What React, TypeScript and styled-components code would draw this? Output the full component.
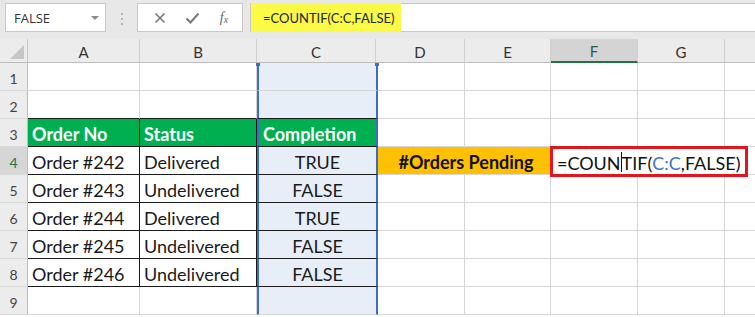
import React from "react";
import styled, { createGlobalStyle } from "styled-components";

const GlobalStyle = createGlobalStyle`
	html, body {
		margin:0;
		padding:0;
		background:#fff;
	}
	body {
		font-family: Lato, "Liberation Sans", sans-serif;
	}
`;

const Window = styled.div`
	width:755px;
	height:317px;
	overflow:hidden;
	display:flex;
	flex-direction:column;
	background:#fff;
`;

const FormulaBar = styled.div`
	flex:0 0 39px;
	box-sizing:border-box;
	display:flex;
	align-items:flex-start;
	padding:3px 0 0 5px;
	background:#e8e8e8;
`;

const NameBox = styled.div`
	flex:0 0 101px;
	height:29px;
	box-sizing:border-box;
	display:flex;
	align-items:center;
	justify-content:space-between;
	padding:0 6px 0 8px;
	background:#fff;
	border:1px solid #c8c8c8;
	font-family:"Open Sans", sans-serif;
	font-size:13px;
	color:#333;
`;

const Caret = styled.span`
	width:0;
	height:0;
	border-left:4px solid transparent;
	border-right:4px solid transparent;
	border-top:4px solid #8a8a8a;
`;

const Grip = styled.div`
	flex:0 0 auto;
	display:flex;
	flex-direction:column;
	gap:3px;
	margin:10px 14px 0 15px;
	span {
		width:2px;
		height:2px;
		background:#b4b4b4;
	}
`;

const IconBox = styled.div`
	flex:0 0 106px;
	height:29px;
	box-sizing:border-box;
	display:flex;
	align-items:center;
	justify-content:space-around;
	padding:0 4px 0 6px;
	background:#fff;
	border:1px solid #c8c8c8;
`;

const Fx = styled.span`
	font-family:"Liberation Serif", serif;
	font-style:italic;
	font-size:14px;
	color:#666;
	sub {
		font-size:10px;
		vertical-align:-1px;
	}
`;

const FormulaInput = styled.div`
	flex:1 1 auto;
	height:29px;
	margin-left:7px;
	box-sizing:border-box;
	display:flex;
	background:#fff;
	border:1px solid #c8c8c8;
	border-right:none;
`;

const Highlight = styled.div`
	flex:0 0 150px;
	display:flex;
	align-items:center;
	padding-left:12px;
	box-sizing:border-box;
	background:#fbfb47;
	font-size:13px;
	color:#222;
	margin:-1px 0;
	white-space:nowrap;
`;

const Sheet = styled.div`
	display:flex;
	flex-direction:column;
	font-size:18px;
	color:#111;
`;

const Row = styled.div<{ $h?: number }>`
	display:grid;
	grid-template-columns:28px 112px 117px 119px 89px 86px 87px 87px 87px;
	height:${p => p.$h ?? 28}px;
`;

const Corner = styled.div`
	background:#ececec;
	border-right:1px solid #c4c4c4;
	border-bottom:1px solid #bdbdbd;
	display:flex;
	align-items:flex-end;
	justify-content:flex-end;
	padding:0 3px 3px 0;
	box-sizing:border-box;
	span {
		width:0;
		height:0;
		border-left:14px solid transparent;
		border-bottom:14px solid #c6c6c6;
	}
`;

const ColHead = styled.div<{ $active?: boolean }>`
	box-sizing:border-box;
	display:flex;
	align-items:center;
	justify-content:center;
	padding-top:2px;
	font-size:15px;
	background:${p => (p.$active ? "#d4d4d4" : "#ececec")};
	color:${p => (p.$active ? "#26603f" : "#333")};
	border-right:1px solid #cfcfcf;
	border-bottom:${p => (p.$active ? "2px solid #217346" : "1px solid #bdbdbd")};
`;

const RowHead = styled.div<{ $active?: boolean }>`
	box-sizing:border-box;
	display:flex;
	align-items:center;
	justify-content:center;
	padding-top:3px;
	font-size:14px;
	background:${p => (p.$active ? "#d6d6d6" : "#ececec")};
	color:${p => (p.$active ? "#217346" : "#444")};
	border-right:1px solid #bdbdbd;
	border-bottom:1px solid #d8d8d8;
`;

const RANGE = "#3d6cc0";

const Cell = styled.div<{
	$head?: boolean;
	$table?: boolean;
	$topEdge?: boolean;
	$sel?: boolean;
	$first?: boolean;
	$center?: boolean;
}>`
	position:relative;
	box-sizing:border-box;
	display:flex;
	align-items:center;
	padding:3px 4px 0 4px;
	white-space:nowrap;
	justify-content:${p => (p.$center ? "center" : "flex-start")};
	background:${p =>
		p.$head ? "#00b050" : p.$sel ? "#e8eef8" : "#fff"};
	color:${p => (p.$head ? "#fff" : "#1a1a1a")};
	font-weight:${p => (p.$head ? 700 : 400)};
	border-right:1px solid ${p => (p.$table ? "#1a1a1a" : "#d6d6d6")};
	border-bottom:1px solid ${p => (p.$table || p.$topEdge ? "#1a1a1a" : "#d6d6d6")};
	${p =>
		p.$sel &&
		`
		border-left:2px solid ${RANGE};
		border-right:2px solid ${RANGE};
		margin-right:-2px;
		z-index:1;
	`}
	${p =>
		p.$first &&
		`
		&::before, &::after {
			content:"";
			position:absolute;
			top:0;
			width:4px;
			height:3px;
			background:${RANGE};
		}
		&::before { left:-3px; }
		&::after { right:-3px; }
	`}
`;

const Pending = styled.div`
	grid-column:span 2;
	box-sizing:border-box;
	display:flex;
	align-items:center;
	justify-content:center;
	padding:3px 0 0 6px;
	background:#ffc000;
	font-weight:700;
	color:#111;
	border-right:1px solid #d6d6d6;
	border-bottom:1px solid #d6d6d6;
`;

const Editor = styled.div`
	position:absolute;
	top:-1px;
	left:-1px;
	width:198px;
	height:31px;
	box-sizing:border-box;
	display:flex;
	align-items:center;
	padding:3px 0 0 4px;
	background:#fff;
	border:3px solid #e3161f;
	z-index:2;
	color:#111;
	white-space:nowrap;
`;

const Ref = styled.span`
	color:#4472c4;
`;

const Cursor = styled.span`
	display:inline-block;
	width:1px;
	height:20px;
	background:#111;
	margin-top:-2px;
`;

// last column sits past the window edge, so its letter is not shown
const cols = ["A", "B", "C", "D", "E", "F", "G", ""];

const orders = [
	["Order #242", "Delivered", "TRUE"],
	["Order #243", "Undelivered", "FALSE"],
	["Order #244", "Delivered", "TRUE"],
	["Order #245", "Undelivered", "FALSE"],
	["Order #246", "Undelivered", "FALSE"],
];

const Blank = ({
	from,
	count,
	topEdge,
	first,
}: {
	from: number;
	count: number;
	topEdge?: boolean;
	first?: boolean;
}) => (
	<>
		{Array.from({ length: count }).map((_, i) => {
			const col = from + i;
			return (
				<Cell
					key={col}
					$sel={col === 2}
					$first={first && col === 2}
					$topEdge={topEdge && col < 3}
				/>
			);
		})}
	</>
);

const App: React.FC = () => {
	return (
		<Window>
			<GlobalStyle />
			<FormulaBar>
				<NameBox>
					FALSE
					<Caret />
				</NameBox>
				<Grip>
					<span />
					<span />
					<span />
				</Grip>
				<IconBox>
					<svg width="12" height="12" viewBox="0 0 12 12">
						<path d="M1.5 1.5 L10.5 10.5 M10.5 1.5 L1.5 10.5" stroke="#777" strokeWidth="1.6" />
					</svg>
					<svg width="15" height="12" viewBox="0 0 15 12">
						<path d="M1.5 6.5 L5.5 10.5 L13.5 1.5" fill="none" stroke="#777" strokeWidth="2" />
					</svg>
					<Fx>
						f<sub>x</sub>
					</Fx>
				</IconBox>
				<FormulaInput>
					<Highlight>=COUNTIF(C:C,FALSE)</Highlight>
				</FormulaInput>
			</FormulaBar>

			<Sheet>
				<Row $h={24}>
					<Corner>
						<span />
					</Corner>
					{cols.map((c, i) => (
						<ColHead key={i} $active={c === "F"}>
							{c}
						</ColHead>
					))}
				</Row>

				<Row>
					<RowHead>1</RowHead>
					<Blank from={0} count={8} first />
				</Row>
				<Row>
					<RowHead>2</RowHead>
					<Blank from={0} count={8} topEdge />
				</Row>

				<Row>
					<RowHead>3</RowHead>
					<Cell $head $table>Order No</Cell>
					<Cell $head $table>Status</Cell>
					<Cell $head $table $sel>Completion</Cell>
					<Blank from={3} count={5} />
				</Row>

				{orders.map((o, i) => (
					<Row key={o[0]}>
						<RowHead $active={i === 0}>{i + 4}</RowHead>
						<Cell $table>{o[0]}</Cell>
						<Cell $table>{o[1]}</Cell>
						<Cell $table $sel $center>
							{o[2]}
						</Cell>
						{i === 0 ? (
							<>
								<Pending>#Orders Pending</Pending>
								<Cell>
									<Editor>
										=COUN
										<Cursor />
										TIF(<Ref>C:C</Ref>,FALSE)
									</Editor>
								</Cell>
								<Blank from={6} count={2} />
							</>
						) : (
							<Blank from={3} count={5} />
						)}
					</Row>
				))}

				<Row>
					<RowHead>9</RowHead>
					<Blank from={0} count={8} />
				</Row>
			</Sheet>
		</Window>
	);
};

export default App;
